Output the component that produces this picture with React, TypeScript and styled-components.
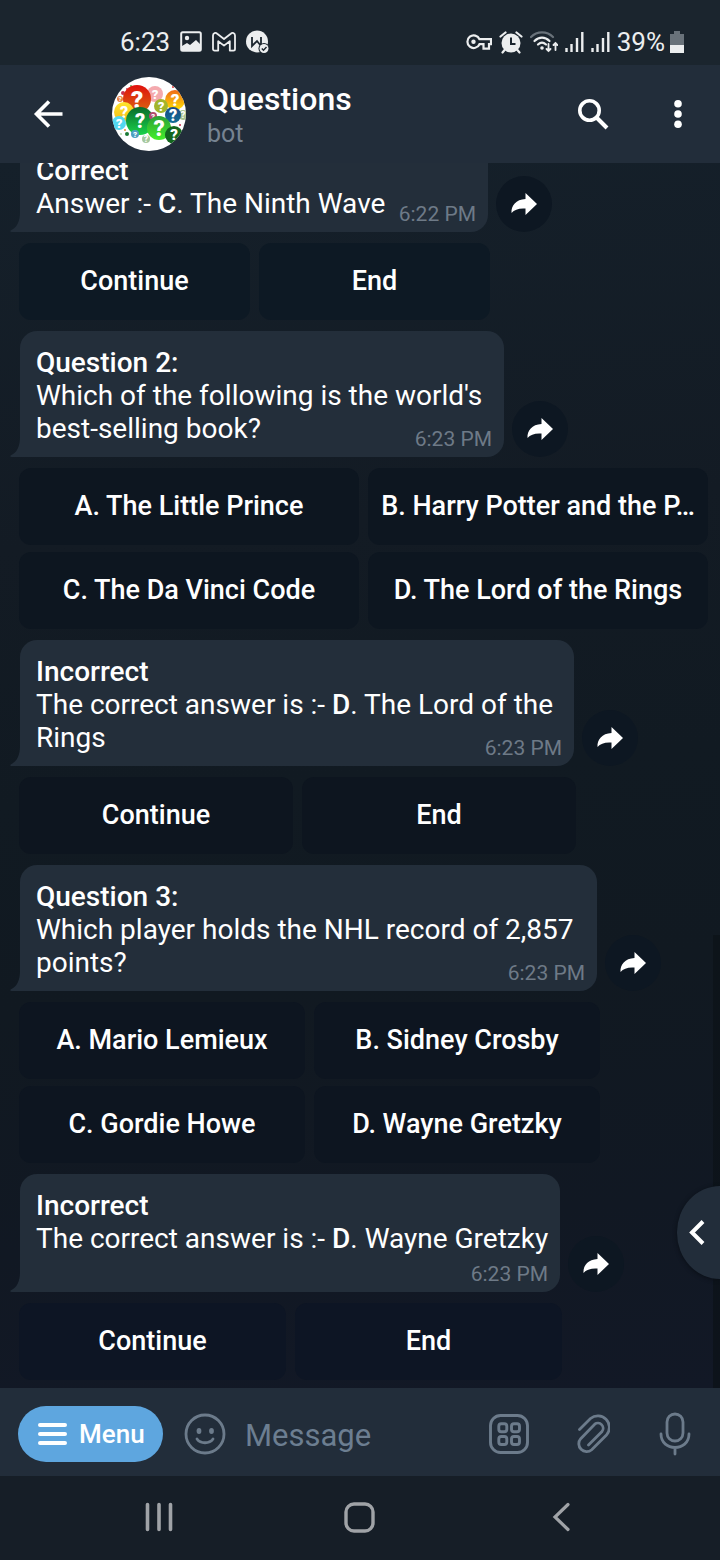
import React from "react";
import styled, { createGlobalStyle } from "styled-components";

const GlobalStyle = createGlobalStyle`
  *, *::before, *::after { box-sizing: border-box; }
  body { margin: 0; background: #151d26; font-family: Roboto, "Liberation Sans", sans-serif; }
  button { font: inherit; color: inherit; border: 0; padding: 0; background: none; cursor: pointer; }
  svg { display: block; flex: none; }
`;

const Phone = styled.div`
  display: flex;
  flex-direction: column;
  height: 100vh;
  color: #fff;
`;

const StatusBar = styled.div`
  display: flex;
  align-items: flex-end;
  justify-content: space-between;
  flex: none;
  height: 65px;
  padding: 0 36px 8px 120px;
  background: #1b252e;
  color: #eceeef;
  font-size: 26px;
  line-height: 30px;
`;

const StatusGroup = styled.div<{ $gap: number }>`
  display: flex;
  align-items: center;
  gap: ${(p) => p.$gap}px;
`;

const Header = styled.header`
  display: flex;
  align-items: center;
  flex: none;
  height: 98px;
  padding: 0 22px 0 28px;
  background: #222d3a;
`;

const IconButton = styled.button`
  display: flex;
  align-items: center;
  justify-content: center;
  width: 40px;
  height: 48px;
`;

const Avatar = styled.svg`
  margin-left: 44px;
`;

const Title = styled.div`
  flex: 1;
  min-width: 0;
  padding-left: 21px;
`;

const Name = styled.h1`
  margin: 0;
  font-size: 32px;
  line-height: 38px;
  font-weight: 500;
`;

const Subtitle = styled.p`
  margin: 0;
  font-size: 25px;
  line-height: 31px;
  color: #768391;
`;

const HeaderActions = styled.div`
  display: flex;
  gap: 45px;
`;

const Chat = styled.main`
  position: relative;
  flex: 1;
  min-height: 0;
  background:
    linear-gradient(#0d141a, #0d131b) right bottom / 7px 37% no-repeat,
    linear-gradient(175deg, #15202a 0%, #131b24 30%, #111a22 50%, #111921 66%, #111823 85%, #121826 100%);
`;

const Scroller = styled.div`
  display: flex;
  flex-direction: column-reverse;
  height: 100%;
  overflow-y: auto;
  scrollbar-width: none;
`;

const Messages = styled.div`
  display: flex;
  flex-direction: column;
  gap: 11px;
  padding: 0 12px 8px 19px;
`;

const MessageRow = styled.div`
  display: flex;
  align-items: flex-end;
  gap: 8px;
  padding-left: 1px;
`;

const Bubble = styled.article<{ $width: number }>`
  position: relative;
  display: flex;
  flex-direction: column;
  width: ${(p) => p.$width}px;
  padding: 15px 8px 5px 16px;
  border-radius: 17px 17px 17px 0;
  background: #232e3a;
  font-size: 28px;
  line-height: 33px;
`;

const Tail = styled.svg`
  position: absolute;
  left: -10px;
  bottom: 0;
`;

const MessageText = styled.p`
  margin: 0;
  strong { font-weight: 500; }
`;

const Time = styled.time<{ $ownLine?: boolean }>`
  align-self: flex-end;
  margin-top: ${(p) => (p.$ownLine ? 6 : -19)}px;
  margin-right: 4px;
  font-size: 21px;
  line-height: 26px;
  color: #6e7a87;
`;

const ShareButton = styled.button`
  display: flex;
  align-items: center;
  justify-content: center;
  flex: none;
  width: 56px;
  height: 56px;
  border-radius: 50%;
  background: #0d1722;
`;

const Keyboard = styled.div<{ $width: number }>`
  display: grid;
  grid-template-columns: repeat(2, minmax(0, 1fr));
  gap: 7px 9px;
  width: ${(p) => p.$width}px;
  max-width: 100%;
`;

const Key = styled.button<{ $tone: string }>`
  height: 77px;
  padding: 0 8px 2px;
  border-radius: 12px;
  background: ${(p) => p.$tone};
  font-size: 27px;
  font-weight: 500;
  white-space: nowrap;
  overflow: hidden;
  text-overflow: ellipsis;
`;

const SideButton = styled.button`
  position: absolute;
  right: 0;
  bottom: 109px;
  display: flex;
  align-items: center;
  padding-left: 12px;
  width: 43px;
  height: 93px;
  border-radius: 43px 0 0 43px / 46px 0 0 46px;
  background: #222d3a;
  box-shadow: 0 1px 4px #0a0f16;
`;

const Composer = styled.form`
  display: flex;
  align-items: center;
  flex: none;
  height: 88px;
  padding: 4px 25px 0 18px;
  background: #222d3a;
  color: #6c7b8b;
`;

const MenuButton = styled.button`
  display: flex;
  align-items: center;
  gap: 12px;
  flex: none;
  width: 145px;
  height: 56px;
  padding-left: 20px;
  border-radius: 28px;
  background: #5ea6df;
  color: #fff;
  font-size: 26px;
  font-weight: 500;
`;

const EmojiButton = styled(IconButton)`
  margin-left: 22px;
  flex: none;
`;

const MessageInput = styled.input`
  flex: 1;
  min-width: 0;
  margin-left: 20px;
  padding: 4px 0 0;
  border: 0;
  outline: 0;
  background: none;
  color: #fff;
  font: 31px/38px Roboto, "Liberation Sans", sans-serif;
  &::placeholder { color: #6c7e91; opacity: 1; }
`;

const ComposerActions = styled.div`
  display: flex;
  gap: 43px;
`;

const NavBar = styled.nav`
  display: grid;
  grid-template-columns: repeat(3, 1fr);
  justify-items: center;
  align-items: center;
  flex: none;
  height: 84px;
  padding: 0 58px 2px 58px;
  background: #161e27;
  color: #a0a3a7;
`;

type Message = {
  title: string;
  text: React.ReactNode;
  time: string;
  width: number;
  timeOnOwnLine?: boolean;
  keys: string[];
  keysWidth: number;
  tone: string;
};

const messages: Message[] = [
  {
    title: "Correct",
    text: <>Answer :- <strong>C</strong>. The Ninth Wave</>,
    time: "6:22 PM",
    width: 468,
    keys: ["Continue", "End"],
    keysWidth: 471,
    tone: "#0d1924",
  },
  {
    title: "Question 2:",
    text: "Which of the following is the world's best-selling book?",
    time: "6:23 PM",
    width: 484,
    keys: ["A. The Little Prince", "B. Harry Potter and the P…", "C. The Da Vinci Code", "D. The Lord of the Rings"],
    keysWidth: 689,
    tone: "#0d1620",
  },
  {
    title: "Incorrect",
    text: <>The correct answer is :- <strong>D</strong>. The Lord of the Rings</>,
    time: "6:23 PM",
    width: 554,
    keys: ["Continue", "End"],
    keysWidth: 557,
    tone: "#0d151f",
  },
  {
    title: "Question 3:",
    text: "Which player holds the NHL record of 2,857 points?",
    time: "6:23 PM",
    width: 577,
    keys: ["A. Mario Lemieux", "B. Sidney Crosby", "C. Gordie Howe", "D. Wayne Gretzky"],
    keysWidth: 581,
    tone: "#0d1520",
  },
  {
    title: "Incorrect",
    text: <>The correct answer is :- <strong>D</strong>. Wayne Gretzky</>,
    time: "6:23 PM",
    width: 540,
    timeOnOwnLine: true,
    keys: ["Continue", "End"],
    keysWidth: 543,
    tone: "#0d1524",
  },
];

/* [centre x, centre y, radius, colour, glyph size] */
const balls: [number, number, number, string, number][] = [
  [43, 17, 8, "#f4a9ae", 13],
  [8, 22, 3, "#e8803a", 6],
  [25, 22, 14, "url(#red)", 24],
  [63, 23, 10, "url(#orange)", 17],
  [12, 35, 10, "url(#yellow)", 16],
  [49, 29, 7, "#a3b52c", 13],
  [71, 38, 5, "#a8c28e", 9],
  [28, 44, 14, "url(#green)", 20],
  [7, 46, 7, "#52d8f0", 13],
  [41, 39, 4, "#b04a6c", 8],
  [61, 38, 8, "url(#blue)", 16],
  [47, 51, 12, "url(#lime)", 22],
  [62, 58, 9, "#14661f", 15],
  [23, 57, 4, "#4d9fc0", 8],
  [34, 62, 4, "#a5c79d", 9],
];

const specks: [number, number, number, string][] = [
  [11, 16, 2, "#c8324f"], [15, 12, 1, "#b83a5c"], [19, 9, 1, "#6a9f50"],
  [15, 57, 2, "#1b7a35"], [13, 53, 1, "#e08a30"], [68, 48, 1, "#c02848"],
  [61, 10, 1, "#d33"], [9, 57, 1, "#b5d8a8"],
];

const gradients: [string, string, string][] = [
  ["red", "#e0100c", "#d86a12"],
  ["orange", "#ee6a1a", "#ffe000"],
  ["yellow", "#ffe62e", "#f3b913"],
  ["green", "#0a6b2c", "#19d24a"],
  ["blue", "#1b4a86", "#0f6c94"],
  ["lime", "#2b9f38", "#45f02a"],
];

function QuestionsAvatar() {
  return (
    <Avatar width="74" height="74" viewBox="0 0 74 74" role="img" aria-label="Questions avatar">
      <defs>
        <clipPath id="disc"><circle cx="37" cy="37" r="37" /></clipPath>
        {gradients.map(([id, from, to]) => (
          <linearGradient key={id} id={id} x1="0" y1="0" x2="0" y2="1">
            <stop offset="0" stopColor={from} />
            <stop offset="1" stopColor={to} />
          </linearGradient>
        ))}
      </defs>
      <g clipPath="url(#disc)">
        <rect width="74" height="74" fill="#fff" />
        {specks.map(([x, y, r, fill], i) => <circle key={i} cx={x} cy={y} r={r} fill={fill} />)}
        {balls.map(([x, y, r, fill, size], i) => (
          <g key={i}>
            <circle cx={x} cy={y} r={r} fill={fill} />
            <text x={x} y={y + size * 0.36} fontSize={size} fontWeight="900" fontFamily="Roboto, sans-serif" textAnchor="middle" fill="#fff">?</text>
          </g>
        ))}
      </g>
    </Avatar>
  );
}

function SignalIcon() {
  return (
    <svg width="19" height="22" viewBox="0 0 19 22" stroke="#eceeef" strokeWidth="2.4">
      <path d="M1.5 17v4M6.5 13v8M12 7v14M17.3 1v20" />
    </svg>
  );
}

export default function App() {
  return (
    <Phone>
      <GlobalStyle />
      <StatusBar>
        <StatusGroup $gap={10}>
          <span>6:23</span>
          <svg width="22" height="22" viewBox="0 0 22 22">
            <rect x="1.2" y="1.2" width="19.6" height="18.6" rx="1.5" fill="none" stroke="#eceeef" strokeWidth="2" />
            <circle cx="7" cy="7" r="2.2" fill="#eceeef" />
            <path d="M2 15l5-3 3 2 6-5 5 5v6H2z" fill="#eceeef" />
          </svg>
          <svg width="24" height="20" viewBox="0 0 24 20" fill="none" stroke="#eceeef" strokeWidth="1.8" strokeLinejoin="round">
            <path d="M1 3.500C1 1 3.600.3 5.200 1.700L12 7l6.800-5.300C20.400.3 23 1 23 3.500V17c0 1-.6 1.600-1.600 1.600h-3.600V9.200L12 13.600 6.200 9.200v9.400H2.600C1.600 18.600 1 18 1 17z" />
          </svg>
          <svg width="24" height="24" viewBox="0 0 24 24">
            <circle cx="11" cy="11.500" r="11" fill="#eceeef" />
            <path d="M6 7v9l5-5 4 5V7" fill="none" stroke="#1b252e" strokeWidth="1.800" />
            <circle cx="18" cy="18.500" r="5.500" fill="#1b252e" />
            <circle cx="18" cy="18.500" r="4.500" fill="#eceeef" />
            <path d="M15.800 18.500l1.700 1.700 3-3.200" fill="none" stroke="#1b252e" strokeWidth="1.400" />
          </svg>
        </StatusGroup>
        <StatusGroup $gap={7}>
          <svg width="26" height="16" viewBox="0 0 26 16" fill="none" stroke="#eceeef" strokeWidth="2.200">
            <path d="M13.500 5.200H25v5h-2v4.500h-5.500v-4.500h-4A6.300 6.300 0 1 1 13.500 5.200z" />
            <circle cx="7.500" cy="7.800" r="2.200" fill="#eceeef" stroke="none" />
          </svg>
          <svg width="24" height="23" viewBox="0 0 24 23">
            <circle cx="12" cy="12" r="9.500" fill="#eceeef" />
            <path d="M1.500 5.500l5-4M22.500 5.500l-5-4M6 18.500l-2.500 3M18 18.500l2.500 3" stroke="#eceeef" strokeWidth="2.200" strokeLinecap="round" />
            <path d="M12 6.500V13h4.500" fill="none" stroke="#1b252e" strokeWidth="2" />
          </svg>
          <svg width="28" height="22" viewBox="0 0 28 22" fill="none" strokeWidth="2.200" strokeLinecap="round">
            <path d="M1 6C7-.2 17-.2 23 6" stroke="#69727a" />
            <path d="M4.500 10c4.500-4.500 10.500-4.500 15 0M8 13.500c2.500-2.300 5.500-2.300 8 0" stroke="#eceeef" />
            <circle cx="12" cy="17" r="1.800" fill="#eceeef" />
            <path d="M18.500 13v7m-2-2l2 2 2-2M25.500 19v-7m-2 2l2-2 2 2" stroke="#eceeef" strokeWidth="1.800" />
          </svg>
          <SignalIcon />
          <SignalIcon />
          <StatusGroup $gap={5}>
            <span>39%</span>
            <svg width="14" height="22" viewBox="0 0 14 22">
              <path d="M4 0h6v3h4v11H0V3h4z" fill="#69727a" />
              <path d="M0 14h14v8H0z" fill="#eceeef" />
            </svg>
          </StatusGroup>
        </StatusGroup>
      </StatusBar>

      <Header>
        <IconButton aria-label="Back">
          <svg width="30" height="28" viewBox="0 0 30 28" fill="none" stroke="#fff" strokeWidth="3.600">
            <path d="M16 1.500L3.500 14 16 26.500M3.500 14H29.500" />
          </svg>
        </IconButton>
        <QuestionsAvatar />
        <Title>
          <Name>Questions</Name>
          <Subtitle>bot</Subtitle>
        </Title>
        <HeaderActions>
          <IconButton aria-label="Search">
            <svg width="32" height="32" viewBox="0 0 32 32" fill="none" stroke="#fff" strokeWidth="3.600">
              <circle cx="12.500" cy="12.500" r="9.700" />
              <path d="M19.500 19.500L30 30" strokeWidth="4" />
            </svg>
          </IconButton>
          <IconButton aria-label="More options">
            <svg width="8" height="28" viewBox="0 0 8 28" fill="#fff">
              <circle cx="4" cy="3.800" r="3.800" /><circle cx="4" cy="14" r="3.800" /><circle cx="4" cy="24.200" r="3.800" />
            </svg>
          </IconButton>
        </HeaderActions>
      </Header>

      <Chat>
        <Scroller>
          <Messages>
            {messages.map((m, i) => (
              <React.Fragment key={i}>
                <MessageRow>
                  <Bubble $width={m.width}>
                    <Tail width="11" height="20" viewBox="0 0 11 20" fill="#232e3a">
                      <path d="M11 0H10C10 9 7 15.500 1 18.200C0 18.700 0 20 1.500 20H11z" />
                    </Tail>
                    <MessageText>
                      <strong>{m.title}</strong>
                      <br />
                      {m.text}
                    </MessageText>
                    <Time $ownLine={m.timeOnOwnLine}>{m.time}</Time>
                  </Bubble>
                  <ShareButton aria-label="Share message">
                    <svg width="26" height="22" viewBox="0 0 26 22" fill="#fff">
                      <path d="M14.500 0L26 11 14.500 22v-6.500C8 15 3.500 16.500.5 20 0 12.500 5 6.500 14.500 6z" />
                    </svg>
                  </ShareButton>
                </MessageRow>
                <Keyboard $width={m.keysWidth}>
                  {m.keys.map((label) => <Key key={label} $tone={m.tone}>{label}</Key>)}
                </Keyboard>
              </React.Fragment>
            ))}
          </Messages>
        </Scroller>
        <SideButton aria-label="Open side panel">
          <svg width="16" height="25" viewBox="0 0 16 25" fill="none" stroke="#fff" strokeWidth="4">
            <path d="M14 1.500L3 12.500l11 11" />
          </svg>
        </SideButton>
      </Chat>

      <Composer onSubmit={(e) => e.preventDefault()}>
        <MenuButton type="button">
          <svg width="29" height="22" viewBox="0 0 29 22" stroke="#fff" strokeWidth="4" strokeLinecap="round">
            <path d="M2 2h25M2 11h25M2 20h25" />
          </svg>
          Menu
        </MenuButton>
        <EmojiButton type="button" aria-label="Emoji">
          <svg width="42" height="42" viewBox="0 0 42 42" fill="none" stroke="currentColor" strokeWidth="2.800" strokeLinecap="round">
            <circle cx="21" cy="21" r="19" />
            <path d="M13 26c3.500 5 12.500 5 16 0" />
            <ellipse cx="15" cy="18" rx="2.400" ry="3" fill="currentColor" stroke="none" />
            <ellipse cx="27.500" cy="18" rx="2.400" ry="3" fill="currentColor" stroke="none" />
          </svg>
        </EmojiButton>
        <MessageInput aria-label="Message" placeholder="Message" />
        <ComposerActions>
          <IconButton type="button" aria-label="Bot keyboard">
            <svg width="40" height="40" viewBox="0 0 40 40" fill="none" stroke="currentColor" strokeWidth="2.900">
              <rect x="1.500" y="1.500" width="37" height="37" rx="10" />
              <rect x="9.800" y="9.800" width="8" height="8" rx="2.500" />
              <rect x="22.500" y="9.800" width="8" height="8" rx="2.500" />
              <rect x="9.800" y="22.500" width="8" height="8" rx="2.500" />
              <rect x="22.500" y="22.500" width="8" height="8" rx="2.500" />
            </svg>
          </IconButton>
          <IconButton type="button" aria-label="Attach">
            <svg width="36" height="42" viewBox="-3 -1 36 42" fill="none" stroke="currentColor" strokeWidth="2.800" strokeLinecap="round">
              <path d="M2.500 16.500L13.500 5.500A11.500 11.500 0 0 1 29.700 21.700L14.700 36.700A7.800 7.800 0 0 1 3.700 25.700L17.700 11.200A5.200 5.200 0 0 1 25 18.500L11.500 32" transform="translate(0 -1)" />
            </svg>
          </IconButton>
          <IconButton type="button" aria-label="Record voice message">
            <svg width="32" height="44" viewBox="0 0 32 44" fill="none" stroke="currentColor" strokeWidth="2.800" strokeLinecap="round">
              <rect x="8" y="2" width="16" height="27" rx="8" />
              <path d="M2 22c0 18 28 18 28 0M16 36v6" />
            </svg>
          </IconButton>
        </ComposerActions>
      </Composer>

      <NavBar aria-label="System navigation">
        <IconButton aria-label="Recent apps">
          <svg width="28" height="30" viewBox="0 0 28 30" stroke="currentColor" strokeWidth="3.600" strokeLinecap="round">
            <path d="M2.500 2.500v25M14 2.500v25M25.500 2.500v25" />
          </svg>
        </IconButton>
        <IconButton aria-label="Home">
          <svg width="31" height="31" viewBox="0 0 31 31" fill="none" stroke="currentColor" strokeWidth="3.400">
            <rect x="2" y="2" width="27" height="27" rx="8" />
          </svg>
        </IconButton>
        <IconButton aria-label="Back to previous screen">
          <svg width="18" height="30" viewBox="0 0 18 30" fill="none" stroke="currentColor" strokeWidth="3.200" strokeLinecap="round">
            <path d="M16 2.500L3 15l13 12.500" />
          </svg>
        </IconButton>
      </NavBar>
    </Phone>
  );
}
